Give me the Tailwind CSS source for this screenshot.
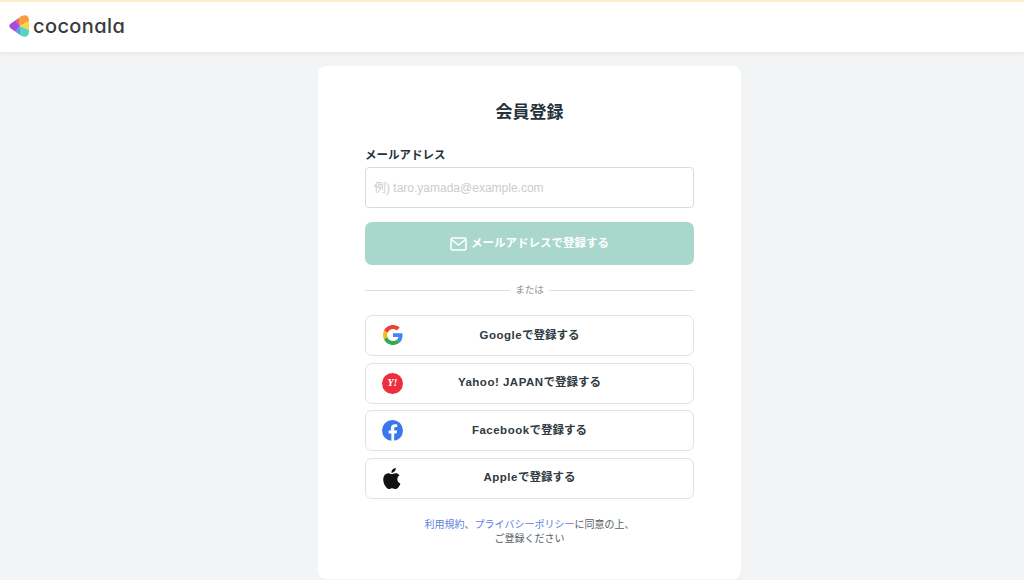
<!DOCTYPE html>
<html lang="ja">
  <head>
    <meta charset="UTF-8" />
    <meta name="viewport" content="width=device-width, initial-scale=1.0" />
    <title>会員登録</title>
    <script src="https://cdn.jsdelivr.net/npm/@tailwindcss/browser@4"></script>
  </head>
  <body class="bg-[#f2f4f6] h-[580px] overflow-hidden font-['Liberation_Sans','Noto_Sans_CJK_JP',sans-serif] text-[#2f3a42]">
    <header class="h-[52px] bg-white border-t-2 border-[#fbeecb] shadow-[0_2px_4px_rgba(0,0,0,0.06)] flex items-center pl-[9px] pb-[2px]">
      <svg width="20" height="22" viewBox="0 0 20 22" class="mr-[4px]">
        <clipPath id="logoShape">
          <path d="M1.200 9 L12.500 1 Q19.500 -1.500 20 5 V17 Q19.500 23.500 12.500 21 L1.200 13 Q-0.600 11 1.200 9z" />
        </clipPath>
        <g clip-path="url(#logoShape)">
          <polygon points="11,11 9,0 20,0 20,6" fill="#fb9d3b" />
          <polygon points="11,11 4,2 9,0" fill="#ee5a78" />
          <polygon points="11,11 4,2 0,6 0,16 6,17" fill="#a44fd6" />
          <polygon points="11,11 6,17 2,22 11,22" fill="#5a9be8" />
          <polygon points="11,11 11,22 20,22 20,15" fill="#5bd0c4" />
          <polygon points="11,11 20,6 20,15" fill="#f9d648" />
        </g>
      </svg>
      <span class="font-['Inter',sans-serif] [font-feature-settings:'cv11'] text-[20px] font-medium leading-none tracking-[0.02em] text-[#3b3b3b]">coconala</span>
    </header>

    <main class="flex pl-[318px] pt-[14px]">
      <section class="w-[423px] h-[513px] bg-white rounded-lg px-[47px] pt-[35px]">
        <h1 class="text-[17px] font-bold text-center leading-6 text-[#26323a]">会員登録</h1>

        <label class="block mt-[21px] text-[11.500px] font-bold leading-[18px] text-[#26323a]">メールアドレス</label>
        <input type="text" placeholder="例) taro.yamada@example.com" class="block mt-[3px] w-full h-[41px] bg-white border border-[#d9dcde] rounded px-2 text-[12px] placeholder:text-[#c9cdd0]" />

        <button class="mt-[14px] w-full h-[43px] bg-[#aad7cb] rounded-[7px] flex items-center justify-center gap-[4px] text-white text-[11.500px] font-bold">
          <svg width="17" height="14" viewBox="0 0 17 14" fill="none" stroke="white" stroke-width="1.500">
            <rect x="1" y="1" width="15" height="12" rx="1.500" />
            <path d="M1.500 2.500 L8.500 8 L15.500 2.500" />
          </svg>
          メールアドレスで登録する
        </button>

        <div class="mt-[18px] flex items-center justify-between text-[9.500px] leading-[14px] text-[#8d9499]">
          <div class="w-[145px] border-t border-[#dcdfe1]"></div>
          <span>または</span>
          <div class="w-[145px] border-t border-[#dcdfe1]"></div>
        </div>

        <div class="mt-[18px] flex flex-col gap-[6.500px]">
          <button class="relative h-[41px] w-full border border-[#e0e2e4] rounded-[7px] flex items-center justify-center text-[11.500px] font-bold">
            <svg width="20" height="20" viewBox="0 0 48 48" class="absolute left-[17px] top-[9px]">
              <path fill="#EA4335" d="M24 9.500c3.500 0 6.700 1.300 9.200 3.600l6.900-6.900C35.900 2.400 30.500 0 24 0 14.600 0 6.500 5.400 2.600 13.200l8 6.200C12.500 13.700 17.800 9.500 24 9.500z" />
              <path fill="#4285F4" d="M47 24.500c0-1.600-.1-3.100-.4-4.500H24v9h13c-.6 3-2.200 5.500-4.800 7.200l7.700 6C44.400 37.900 47 31.800 47 24.500z" />
              <path fill="#FBBC05" d="M10.500 28.600c-.5-1.400-.8-3-.8-4.600s.3-3.200.8-4.600l-8-6.200C.9 16.500 0 20.100 0 24s.9 7.500 2.600 10.800l7.900-6.200z" />
              <path fill="#34A853" d="M24 48c6.500 0 11.900-2.100 15.900-5.800l-7.700-6c-2.200 1.500-4.900 2.300-8.200 2.300-6.200 0-11.500-4.200-13.400-9.900l-8 6.200C6.500 42.600 14.600 48 24 48z" />
            </svg>
            <span><span class="tracking-[0.5px]">Google</span>で登録する</span>
          </button>
          <button class="relative h-[41px] w-full border border-[#e0e2e4] rounded-[7px] flex items-center justify-center text-[11.500px] font-bold">
            <span class="absolute left-[16px] top-[9px] w-[21px] h-[21px] rounded-full bg-[#ee2e3d] flex items-center justify-center text-white font-['Liberation_Serif',serif] text-[10px] italic leading-none font-bold">Y!</span>
            <span><span class="tracking-[0.5px]">Yahoo! JAPAN</span>で登録する</span>
          </button>
          <button class="relative h-[41px] w-full border border-[#e0e2e4] rounded-[7px] flex items-center justify-center text-[11.500px] font-bold">
            <svg width="21" height="21" viewBox="0 0 24 24" class="absolute left-[16px] top-[9px]">
              <circle cx="12" cy="12" r="12" fill="#3b76ee" />
              <path fill="white" d="M16.700 15.500l.5-3.500h-3.300V9.800c0-1 .5-1.900 2-1.900h1.500V5c0 0-1.400-.2-2.700-.2-2.700 0-4.500 1.700-4.500 4.600V12H7.600v3.500h3.100V24h3.200v-8.500z" />
            </svg>
            <span><span class="tracking-[0.5px]">Facebook</span>で登録する</span>
          </button>
          <button class="relative h-[41px] w-full border border-[#e0e2e4] rounded-[7px] flex items-center justify-center text-[11.500px] font-bold">
            <svg width="19" height="21" viewBox="3 0.800 18 22" class="absolute left-[17px] top-[9px]">
              <path fill="#111" d="M17.050 12.500c0-2.700 2.200-4 2.300-4.100-1.300-1.800-3.200-2.100-3.900-2.100-1.700-.2-3.200 1-4.100 1-.9 0-2.200-1-3.600-1-1.800 0-3.600 1.100-4.500 2.700-2 3.400-.5 8.300 1.400 11 .9 1.300 2 2.800 3.500 2.800 1.400-.1 1.900-.9 3.600-.9s2.200.9 3.600.9c1.500 0 2.500-1.400 3.400-2.700 1.100-1.500 1.500-3 1.500-3.100-.1 0-3.200-1.200-3.200-4.500zM14.300 4.300c.8-.9 1.300-2.200 1.100-3.500-1.100 0-2.500.7-3.300 1.700-.7.8-1.300 2.100-1.200 3.400 1.300.1 2.500-.6 3.400-1.600z" />
            </svg>
            <span><span class="tracking-[0.5px]">Apple</span>で登録する</span>
          </button>
        </div>

        <p class="mt-[19px] text-center text-[10px] leading-[14px] text-[#555c61]">
          <a href="#" class="text-[#5b82dc]">利用規約</a>、<a href="#" class="text-[#5b82dc]">プライバシーポリシー</a>に同意の上、<br />ご登録ください
        </p>
      </section>
    </main>
  </body>
</html>
